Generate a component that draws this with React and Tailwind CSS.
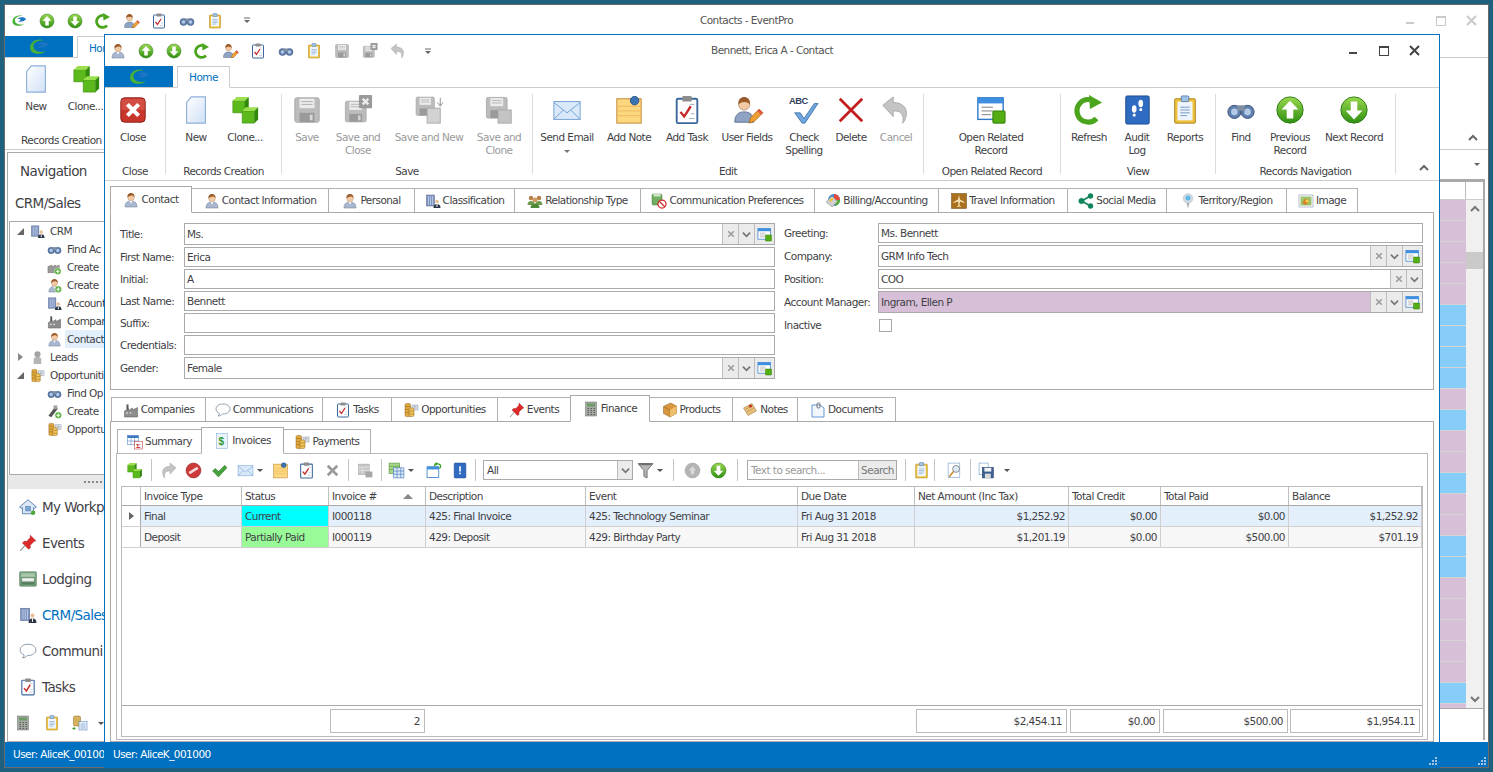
import React from 'react';

const green = (
  <linearGradient id="gr" x1="0" y1="0" x2="0" y2="1">
    <stop offset="0" stopColor="#9ad84e" />
    <stop offset="1" stopColor="#2f8f12" />
  </linearGradient>
);

const cube = (x, y, s) => (
  <g key={`${x}-${y}`}>
    <path d={`M${x} ${y + 4}h${s}v${s}h-${s}z`} fill="#5cb91c" stroke="#3c8a10" strokeWidth=".6" />
    <path d={`M${x} ${y + 4}l4 -4h${s}l-4 4z`} fill="#9be04c" />
    <path d={`M${x + s} ${y + 4}l4 -4v${s}l-4 4z`} fill="#2f8a0c" />
  </g>
);

const floppy = (
  <g>
    <rect x="3" y="3" width="26" height="26" rx="2" fill="#bcbcbc" stroke="#a8a8a8" />
    <rect x="8" y="4" width="16" height="10" fill="#ececec" />
    <path d="M10 7h12M10 10h12" stroke="#aaa" />
    <rect x="8" y="19" width="16" height="10" fill="#9a9a9a" />
    <rect x="19" y="21" width="3" height="6" fill="#d8d8d8" />
  </g>
);

const person = (
  <g>
    <path d="M4 30c0-9 5-12 12-12s12 3 12 12z" fill="#a9b8d0" stroke="#68788f" />
    <path d="M13 18l3 5 3-5z" fill="#fff" />
    <circle cx="16" cy="11" r="6.5" fill="#f2cba5" stroke="#a8785a" strokeWidth=".7" />
    <path d="M9 11c-1-7 4-9 7-9s8 2 7 9c-1-3-3-4-6-4-3 1-6 1-8 4z" fill="#9a5a2a" />
  </g>
);

const building = (
  <g>
    <rect x="3" y="4" width="16" height="22" fill="#7e94c0" stroke="#56688e" />
    <path d="M7 6v18M11 6v18M15 6v18" stroke="#c3d0e8" strokeWidth="1.6" />
    <circle cx="24" cy="17" r="3.6" fill="#e8bf95" />
    <path d="M17 30c0-6 3-8 7-8s7 2 7 8z" fill="#2b3444" />
    <path d="M23 22h2v6h-2z" fill="#fff" />
  </g>
);

const coins = (
  <g>
    <rect x="18" y="6" width="12" height="10" fill="#dfe5ee" stroke="#8a93a2" />
    <path d="M21 9h6M21 12h6" stroke="#7d8796" />
    <rect x="4" y="3" width="11" height="26" rx="3" fill="#e0a93f" stroke="#96661a" />
    <rect x="12" y="12" width="10" height="17" rx="3" fill="#efc45c" stroke="#96661a" />
    <path d="M4 9h11M4 15h8M4 21h8M12 18h10M12 24h10" stroke="#96661a" />
  </g>
);

const grayX = <path d="M7 7l18 18M25 7L7 25" stroke="#9a9a9a" strokeWidth="5" />;

const undoPath = 'M2 11L13 2v6c9 0 15 5 14 13-.5 4-2 7-4 9 1-4 1-8-2-11-2-2-5-2-8-2v6z';

const icons = {
  logo: (
    <g>
      <path d="M3 17C3 8 13 3 23 6 13 6 7 10 8 16c1 6 9 9 18 6-7 6-23 5-23-5z" fill="#49b13a" />
      <path d="M13 12c5-5 14-4 17 0-4 6-12 5-17 6 4-2 6-3 6-6z" fill="#1b74c4" />
    </g>
  ),
  up: (
    <g>
      <defs>{green}</defs>
      <circle cx="16" cy="16" r="14" fill="url(#gr)" stroke="#2a7a10" />
      <path d="M16 6l9 9.500h-5.500V25h-7v-9.500H7z" fill="#fff" />
    </g>
  ),
  down: (
    <g>
      <defs>{green}</defs>
      <circle cx="16" cy="16" r="14" fill="url(#gr)" stroke="#2a7a10" />
      <path d="M16 26l9-9.500h-5.500V7h-7v9.500H7z" fill="#fff" />
    </g>
  ),
  upGray: (
    <g>
      <circle cx="16" cy="16" r="14" fill="#b4b4b4" stroke="#a0a0a0" />
      <path d="M16 8l7 8h-4v7h-6v-7H9z" fill="#dadada" />
    </g>
  ),
  refresh: (
    <g>
      <path d="M24 25A12 12 0 1 1 17 5" fill="none" stroke="#4aa51c" strokeWidth="5.500" />
      <path d="M16 0l14 8-13 7z" fill="#4aa51c" />
    </g>
  ),
  userEdit: (
    <g>
      <path d="M3 29c0-8 4-11 10-11s10 3 10 11z" fill="#8ea3c4" stroke="#5d6f8d" />
      <circle cx="13" cy="10" r="6" fill="#f2cba5" stroke="#a8785a" strokeWidth=".7" />
      <path d="M7 10c-1-6 3-8 6-8s7 2 6 8c-2-3-8-4-12 0z" fill="#9a5a2a" />
      <path d="M18 30l2-6 9-9 4 4-9 9z" fill="#f0a030" stroke="#9a5a10" strokeWidth=".7" />
      <path d="M27 17l4 4 2-2-4-4z" fill="#e0554a" />
    </g>
  ),
  task: (
    <g>
      <rect x="5" y="4" width="22" height="26" rx="1.500" fill="#fff" stroke="#3c689c" strokeWidth="2" />
      <rect x="11" y="1" width="10" height="6" rx="1" fill="#8d8d8d" />
      <path d="M9 18l4 5 7-11" fill="none" stroke="#c62828" strokeWidth="2.500" />
      <path d="M20 20h4M18 25h6M19 10h5" stroke="#9ab" />
    </g>
  ),
  bino: (
    <g>
      <circle cx="9" cy="18" r="7" fill="#5f7fae" stroke="#3b5276" />
      <circle cx="23" cy="18" r="7" fill="#5f7fae" stroke="#3b5276" />
      <circle cx="9" cy="18" r="3.500" fill="#b5cae6" />
      <circle cx="23" cy="18" r="3.500" fill="#b5cae6" />
      <rect x="12" y="11" width="8" height="6" fill="#7f8da3" />
    </g>
  ),
  report: (
    <g>
      <rect x="5" y="4" width="22" height="26" rx="1" fill="#f0c23c" stroke="#a8801a" />
      <rect x="8" y="7" width="16" height="20" fill="#eef4fc" />
      <path d="M11 13h10M11 16h10M11 19h10M11 22h7" stroke="#6f95c4" />
      <rect x="12" y="1" width="8" height="6" rx="1" fill="#9fc2e6" stroke="#5a7fa8" />
    </g>
  ),
  save: floppy,
  saveX: (
    <g>
      <g transform="translate(0 4) scale(.85)">{floppy}</g>
      <rect x="17" y="0" width="14" height="14" rx="1" fill="#9a9a9a" />
      <path d="M21 4l6 6M27 4l-6 6" stroke="#eee" strokeWidth="2.500" />
    </g>
  ),
  saveNew: (
    <g>
      <g transform="scale(.75)">{floppy}</g>
      <rect x="14" y="14" width="14" height="16" fill="#d2d2d2" stroke="#a8a8a8" />
      <path d="M28 3v8M25 8l3 4 3-4" stroke="#8a8a8a" fill="none" />
    </g>
  ),
  saveClone: (
    <g>
      <g transform="scale(.85)">{floppy}</g>
      <rect x="15" y="16" width="14" height="14" fill="#c4c4c4" stroke="#a8a8a8" />
    </g>
  ),
  undo: <path d={undoPath} fill="#c4c4c4" stroke="#a8a8a8" />,
  redo: <path d={undoPath} fill="#c4c4c4" stroke="#a8a8a8" transform="matrix(-1 0 0 1 32 0)" />,
  person,
  lead: (
    <g>
      <circle cx="16" cy="9" r="6.500" fill="#a3a3a3" />
      <path d="M8 30V20c0-4 4-5 8-5s8 1 8 5v10z" fill="#b4b4b4" />
    </g>
  ),
  doc: (
    <g>
      <defs>
        <linearGradient id="dc" x1="0" y1="0" x2="1" y2="1">
          <stop offset="0" stopColor="#fff" />
          <stop offset="1" stopColor="#cfe0f6" />
        </linearGradient>
      </defs>
      <path d="M11 2h15v28H6V8z" fill="url(#dc)" stroke="#8fb0da" strokeWidth="1.200" />
    </g>
  ),
  cubes: <g>{cube(3, 2, 13)}{cube(13, 13, 13)}</g>,
  close: (
    <g>
      <rect x="3" y="3" width="26" height="26" rx="4" fill="#c8352a" stroke="#8c1c14" />
      <path d="M3.500 16V7c0-2 1-3 3-3h19c2 0 3 1 3 3v9z" fill="#e0665a" opacity=".5" />
      <path d="M10 10l12 12M22 10L10 22" stroke="#fff" strokeWidth="4.500" />
    </g>
  ),
  mail: (
    <g>
      <rect x="2" y="7" width="28" height="19" fill="#d9e9fa" stroke="#6f9fd3" />
      <path d="M2 8l14 11L30 8M2 26l10-10M30 26L20 16" fill="none" stroke="#6f9fd3" />
    </g>
  ),
  note: (
    <g>
      <rect x="3" y="4" width="26" height="26" fill="#fbd77f" stroke="#c18434" />
      <path d="M3 12h26M3 17h26M3 22h26" stroke="#eeb95e" />
      <circle cx="22" cy="6" r="4.500" fill="#3a74b4" stroke="#214f85" />
    </g>
  ),
  spell: (
    <g>
      <text x="0" y="10" fontFamily="'Liberation Sans',sans-serif" fontSize="10" fontWeight="700" fill="#333d60">ABC</text>
      <path d="M6 19l6 0 4 6L27 9l4 0-14 21h-3z" fill="#6fa6de" stroke="#33689e" strokeWidth=".8" />
    </g>
  ),
  del: <path d="M4 4l24 24M28 4L4 28" stroke="#c41f1f" strokeWidth="3" />,
  xGray: grayX,
  record: (
    <g>
      <rect x="2" y="3" width="27" height="23" fill="#fff" stroke="#2f7ac8" strokeWidth="1.500" />
      <rect x="2" y="3" width="27" height="6" fill="#3f8fe0" />
      <path d="M6 13h12M6 17h12M6 21h10" stroke="#777" />
      <rect x="18" y="17" width="13" height="13" rx="1" fill="#54ad12" stroke="#2f7c08" />
    </g>
  ),
  audit: (
    <g>
      <rect x="4" y="1" width="25" height="30" rx="1.500" fill="#2f6bc0" stroke="#1c4a8e" />
      <ellipse cx="13" cy="15" rx="2.500" ry="4" fill="#fff" />
      <rect x="11.500" y="20" width="3" height="3" rx="1" fill="#fff" />
      <ellipse cx="20" cy="9" rx="2.500" ry="4" fill="#fff" />
      <rect x="18.500" y="14" width="3" height="3" rx="1" fill="#fff" />
    </g>
  ),
  people: (
    <g>
      <circle cx="8" cy="10" r="4.500" fill="#b5814a" />
      <circle cx="24" cy="10" r="4.500" fill="#b5814a" />
      <circle cx="16" cy="14" r="5" fill="#d19a63" />
      <path d="M1 24c0-5 3-8 7-8s7 3 7 8zM17 24c0-5 3-8 7-8s7 3 7 8z" fill="#6e9b4d" />
      <path d="M7 30c0-6 4-9 9-9s9 3 9 9z" fill="#4f8a3a" />
    </g>
  ),
  commPref: (
    <g>
      <rect x="2" y="2" width="20" height="22" rx="3" fill="#6fae63" stroke="#417a3a" />
      <rect x="5" y="2" width="14" height="5" fill="#cbe6c4" />
      <circle cx="22" cy="22" r="8" fill="#fff" stroke="#d42a2a" strokeWidth="2.500" />
      <path d="M16.500 16.500l11 11" stroke="#d42a2a" strokeWidth="2.500" />
    </g>
  ),
  billing: (
    <g>
      <circle cx="18" cy="14" r="12" fill="#3f86d8" />
      <path d="M18 14V2a12 12 0 0 1 12 12z" fill="#e34a3c" />
      <path d="M18 14h12a12 12 0 0 1-9 11.500z" fill="#52ae33" />
      <path d="M2 18L14 6l11 11-11 11z" fill="#cfcfcf" stroke="#888" />
      <path d="M8 15l6-6 3 3-6 6z" fill="#f2c230" />
    </g>
  ),
  travel: (
    <g>
      <rect x="1" y="1" width="30" height="30" fill="#a9701d" stroke="#6e4710" />
      <path d="M16 4l2 9 9 5v2l-9-3-1 7 3 3v1l-4-1-4 1v-1l3-3-1-7-9 3v-2l9-5z" fill="#f6e2b4" />
    </g>
  ),
  share: (
    <g fill="#0e8458" stroke="#0e8458">
      <path d="M7 16L25 6M7 16l18 10" strokeWidth="3" fill="none" />
      <circle cx="7" cy="16" r="5.500" />
      <circle cx="25" cy="6" r="5" />
      <circle cx="25" cy="26" r="5" />
    </g>
  ),
  pin: (
    <g>
      <path d="M16 31l-3-12h6z" fill="#a8a8a8" />
      <circle cx="16" cy="11" r="9.500" fill="#d5dbe2" stroke="#aab2bc" />
      <circle cx="16" cy="10" r="5" fill="#5fb8e8" />
    </g>
  ),
  image: (
    <g>
      <rect x="2" y="4" width="28" height="24" fill="#fff" stroke="#6a7da0" />
      <rect x="5" y="7" width="22" height="18" fill="#9dc46a" />
      <path d="M14 11l7 3-1 7-7 3-4-5z" fill="#d77f2e" />
      <circle cx="18" cy="16" r="3" fill="#ffd24a" />
    </g>
  ),
  company: (
    <g>
      <path d="M3 18l8-5v4l8-5v4l10-5v19H3z" fill="#8d8d8d" stroke="#555" />
      <rect x="7" y="5" width="4" height="10" fill="#555" />
      <path d="M6 22h4M13 22h4" stroke="#eee" strokeWidth="2" />
    </g>
  ),
  bubble: (
    <g>
      <path d="M16 4C8 4 2 8 2 14c0 4 3 8 7 9 0 2-1 4-3 5 4 0 7-2 9-4h1c8 0 14-4 14-10S24 4 16 4z" fill="#fff" stroke="#76889c" strokeWidth="1.500" />
    </g>
  ),
  coins,
  pushpin: (
    <g>
      <path d="M20 2l10 10-3 1-7 7 0 5-3 2L6 16l3-3h5l6-7z" fill="#dc2a2a" stroke="#9c1414" strokeWidth=".7" />
      <path d="M11 20L2 30" stroke="#999" strokeWidth="2" />
    </g>
  ),
  calc: (
    <g>
      <rect x="5" y="2" width="22" height="28" fill="#a4a9a2" stroke="#6d706b" />
      <rect x="8" y="5" width="16" height="6" fill="#6f9b6a" />
      <path d="M9 15h3M15 15h3M21 15h3M9 19h3M15 19h3M21 19h3M9 23h3M15 23h3M21 23h3M9 27h3M15 27h3M21 27h3" stroke="#5b5b5b" strokeWidth="2" />
    </g>
  ),
  box: (
    <g>
      <path d="M3 9l14-7 12 6v15l-13 7-13-7z" fill="#d9973f" stroke="#8a5c1c" />
      <path d="M3 9l13 7v14" fill="none" stroke="#8a5c1c" />
      <path d="M16 16L29 8v15l-13 7z" fill="#f0be6b" />
    </g>
  ),
  notes: (
    <g>
      <path d="M3 12L20 3l9 15-17 9z" fill="#e7c07c" stroke="#8d6c2f" />
      <path d="M7 15l14-8M10 20l14-8" stroke="#a57d34" />
      <circle cx="17" cy="8" r="3" fill="#c62828" />
    </g>
  ),
  documents: (
    <g>
      <path d="M4 6h16l8 6v18H4z" fill="#f2f7fd" stroke="#3a78c0" strokeWidth="1.500" />
      <rect x="14" y="2" width="6" height="10" rx="2" fill="none" stroke="#555" strokeWidth="1.500" />
    </g>
  ),
  summary: (
    <g>
      <rect x="1" y="3" width="22" height="18" fill="#fff" stroke="#3a78c0" />
      <rect x="1" y="3" width="22" height="5" fill="#3a78c0" />
      <path d="M8 8v13M15 8v13M1 14h22" stroke="#3a78c0" />
      <rect x="15" y="15" width="16" height="15" fill="#fff" stroke="#b02020" />
      <text x="18" y="28" fontFamily="'Liberation Serif',serif" fontSize="14" fontWeight="700" fill="#c02020">Σ</text>
    </g>
  ),
  dollar: (
    <g>
      <rect x="5" y="1" width="22" height="30" fill="#eaf2fb" stroke="#7da4d2" />
      <text x="9" y="23" fontFamily="'Liberation Sans',sans-serif" fontSize="20" fontWeight="700" fill="#2f9a2f">$</text>
    </g>
  ),
  prohibit: (
    <g>
      <circle cx="16" cy="16" r="14" fill="#cc3a3a" stroke="#8e1e1e" />
      <path d="M8 21L24 11" stroke="#f6dada" strokeWidth="5" />
    </g>
  ),
  check: <path d="M3 17l5-5 6 6L26 6l4 5-16 17z" fill="#46a23c" stroke="#2a7424" />,
  grayGrid: (
    <g>
      <rect x="3" y="4" width="20" height="20" fill="#c8c8c8" stroke="#a0a0a0" />
      <path d="M3 10h20M3 16h20M10 10v14" stroke="#f2f2f2" />
      <rect x="16" y="18" width="13" height="11" fill="#a8a8a8" />
    </g>
  ),
  blueGrid: (
    <g>
      <rect x="2" y="2" width="20" height="20" fill="#a8d68a" stroke="#498a2c" />
      <path d="M2 8h20M2 14h20" stroke="#498a2c" />
      <rect x="10" y="11" width="20" height="19" fill="#dbe8f8" stroke="#2f6bb4" />
      <path d="M10 17h20M10 23h20M17 11v19M24 11v19" stroke="#2f6bb4" />
    </g>
  ),
  winArrow: (
    <g>
      <rect x="2" y="9" width="22" height="20" fill="#fff" stroke="#2f7ac8" strokeWidth="1.500" />
      <rect x="2" y="9" width="22" height="5" fill="#3f8fe0" />
      <path d="M16 8c0-4 4-6 8-4 4 1 5 6 1 8" fill="none" stroke="#3aa02a" strokeWidth="2.500" />
      <path d="M20 0l-5 4 6 3z" fill="#3aa02a" />
    </g>
  ),
  exBook: (
    <g>
      <rect x="6" y="2" width="22" height="28" rx="2" fill="#2f6bc0" stroke="#1c4a8e" />
      <rect x="15.500" y="8" width="3" height="10" fill="#fff" />
      <rect x="15.500" y="20" width="3" height="3" fill="#fff" />
    </g>
  ),
  funnel: (
    <g>
      <path d="M2 3h28L19 16v14l-6-3V16z" fill="#b7b7b7" stroke="#555" strokeWidth="1.400" />
      <ellipse cx="16" cy="4" rx="13" ry="2" fill="#6d6d6d" />
    </g>
  ),
  magnify: (
    <g>
      <rect x="4" y="2" width="22" height="27" fill="#fff" stroke="#5e8fc6" />
      <circle cx="19" cy="13" r="6.500" fill="#dce9f7" stroke="#777" strokeWidth="1.500" />
      <path d="M14 18L6 28" stroke="#c98a2e" strokeWidth="3" />
    </g>
  ),
  saveAs: (
    <g>
      <rect x="2" y="2" width="17" height="22" fill="#fff" stroke="#5e8fc6" />
      <rect x="8" y="10" width="21" height="20" fill="#3c5f90" stroke="#2a4670" />
      <rect x="12" y="11" width="13" height="7" fill="#f0f0f0" />
      <rect x="13" y="22" width="11" height="8" fill="#dcdcdc" />
    </g>
  ),
  house: (
    <g>
      <path d="M16 3L1 16l3 2 2-1v11h20V17l2 1 3-2z" fill="#dbe7f5" stroke="#4a76aa" strokeWidth="1.500" />
      <rect x="12" y="15" width="8" height="8" fill="#7ca6d8" stroke="#4a76aa" />
      <circle cx="25" cy="26" r="4" fill="#51a83a" />
    </g>
  ),
  lodging: (
    <g>
      <rect x="1" y="3" width="30" height="26" rx="2" fill="#7aa583" stroke="#55805d" />
      <rect x="4" y="6" width="24" height="6" fill="#a9c8ad" />
      <rect x="5" y="14" width="22" height="7" fill="#f0f0f0" stroke="#55805d" />
      <rect x="4" y="22" width="24" height="4" fill="#53785a" />
    </g>
  ),
  building,
  createCo: (
    <g>
      <path d="M2 14l8-3v3l8-3v3l8-3v16H2z" fill="#9a9a9a" stroke="#666" />
      <circle cx="23" cy="24" r="7" fill="#4dab2e" stroke="#fff" />
      <path d="M23 20v8M19 24h8" stroke="#fff" strokeWidth="2.500" />
    </g>
  ),
  createPerson: (
    <g>
      {person}
      <circle cx="24" cy="24" r="7" fill="#4dab2e" stroke="#fff" />
      <path d="M24 20v8M20 24h8" stroke="#fff" strokeWidth="2.500" />
    </g>
  ),
  createOpp: (
    <g>
      <path d="M3 25L18 5l5 5-14 18z" fill="#555" />
      <rect x="14" y="3" width="8" height="8" fill="#a1a1a1" />
      <circle cx="24" cy="24" r="7" fill="#4dab2e" stroke="#fff" />
      <path d="M24 20v8M20 24h8" stroke="#fff" strokeWidth="2.500" />
    </g>
  ),
  coinDoc: (
    <g>
      <rect x="3" y="2" width="14" height="20" rx="3" fill="#d7b25d" stroke="#8f6e22" />
      <rect x="14" y="13" width="16" height="17" fill="#e9f1fb" stroke="#4a79b4" />
      <path d="M17 18h10M17 22h10M17 26h10" stroke="#4a79b4" />
      <path d="M4 24v6M1 27h6" stroke="#3a9a2a" strokeWidth="2" />
    </g>
  ),
};

const Ic = ({ n, s = 16 }) => (
  <svg width={s} height={s} viewBox="0 0 32 32" className="shrink-0 overflow-visible">
    {icons[n]}
  </svg>
);

const DownTri = ({ className = 'border-t-[#555]' }) => (
  <span className={`h-0 w-0 border-x-[3px] border-t-[3px] border-x-transparent ${className}`} />
);

// small dropdown glyph of the quick access bar
const QatMore = () => (
  <svg width="8" height="7" viewBox="0 0 8 7" className="shrink-0">
    <path d="M1 1h6" stroke="#666" />
    <path d="M1 3h6L4 6z" fill="#666" />
  </svg>
);

const Chevron = ({ up, c = '#666', s = 10 }) => (
  <svg width={s} height={s} viewBox="0 0 10 10" className="shrink-0">
    <path d={up ? 'M1 7l4-4 4 4' : 'M1 3l4 4 4-4'} fill="none" stroke={c} strokeWidth="2" />
  </svg>
);

const WinControls = ({ faded }) => (
  <svg width="76" height="14" viewBox="0 0 76 14" className="shrink-0">
    <g stroke={faded ? '#c9c9c9' : '#444'} fill="none">
      <path d="M1 9h8" strokeWidth="2" />
      <rect x="31.500" y="2.500" width="9" height="9" />
      <path d="M31 3h10" strokeWidth="2" />
      <path d="M62 2l9 9M71 2l-9 9" strokeWidth="2" />
    </g>
  </svg>
);

const Grip = () => (
  <svg width="9" height="9" viewBox="0 0 9 9" className="shrink-0">
    <path d="M7 1h2v2H7zM4 4h2v2H4zM7 4h2v2H7zM1 7h2v2H1zM4 7h2v2H4zM7 7h2v2H7z" fill="#9fc4e6" />
  </svg>
);

const RibbonBtn = ({ w, icon, lines, off, arrow }) => (
  <div className={`flex shrink-0 flex-col items-center text-center leading-[13px] ${w} ${off ? 'text-[#9a9a9a]' : ''}`}>
    <div className="flex h-[32px] items-center">
      <Ic n={icon} s={30} />
    </div>
    <div className="mt-[5px] whitespace-nowrap">{lines[0]}</div>
    {lines[1] && <div>{lines[1]}</div>}
    {arrow && <div className="mt-[6px] flex"><DownTri className="border-t-[#777]" /></div>}
  </div>
);

const RibbonGroup = ({ w, pad, label, children }) => (
  <div className={`mt-[6px] flex h-[80px] shrink-0 flex-col border-r border-[#dcdcdc] ${w}`}>
    <div className={`flex flex-1 ${pad}`}>{children}</div>
    <div className="-mb-1 h-[14px] text-center leading-[14px]">{label}</div>
  </div>
);

const FormTab = ({ w, icon, label, active }) => (
  <div
    className={`-mr-px flex shrink-0 items-center justify-center gap-[2px] border ${w} ${
      active ? 'relative z-10 h-[27px] border-[#aaa] border-b-white bg-white' : 'h-[25px] border-[#b0b0b0] pt-[1px]'
    }`}
  >
    {icon && <Ic n={icon} s={16} />}
    <span>{label}</span>
  </div>
);

const Field = ({ label, value, h = 'h-[20px]', lw = 'w-[64px]', bg = 'bg-white', btns = [] }) => (
  <div className="flex items-center">
    <div className={`shrink-0 pt-[1px] ${lw}`}>{label}</div>
    <div className={`flex min-w-0 flex-1 items-stretch border border-[#aaa] ${h} ${bg}`}>
      <div className="flex flex-1 items-center truncate pl-[2px] pt-[1px]">{value}</div>
      {btns.map(b => (
        <div
          key={b}
          className={`flex shrink-0 items-center justify-center border-l border-[#bdbdbd] bg-[#ebebeb] ${b === 'open' ? 'w-[20px]' : 'w-[16px]'}`}
        >
          {b === 'x' && <Ic n="xGray" s={10} />}
          {b === 'down' && <Chevron c="#777" s={9} />}
          {b === 'open' && <Ic n="record" s={15} />}
        </div>
      ))}
    </div>
  </div>
);

const Sep = ({ w }) => (
  <div className={`flex h-[22px] shrink-0 justify-center ${w}`}>
    <div className="w-px bg-[#c4c4c4]" />
  </div>
);

const Tool = ({ w = 'w-[26px]', n, s = 17, arrow }) => (
  <div className={`flex h-[22px] shrink-0 items-center justify-center gap-[3px] ${w}`}>
    <Ic n={n} s={s} />
    {arrow && <DownTri />}
  </div>
);

const cols = 'grid grid-cols-[19px_101px_87px_97px_160px_212px_117px_154px_92px_128px_133px]';

const invoices = [
  {
    type: 'Final', status: 'Current', statusBg: 'bg-[#00ffff]', num: 'I000118', desc: '425: Final Invoice',
    event: '425: Technology Seminar', due: 'Fri Aug 31 2018', net: '$1,252.92', credit: '$0.00', paid: '$0.00',
    bal: '$1,252.92', rowBg: 'bg-[#e3effa]', cur: true,
  },
  {
    type: 'Deposit', status: 'Partially Paid', statusBg: 'bg-[#98fb98]', num: 'I000119', desc: '429: Deposit',
    event: '429: Birthday Party', due: 'Fri Aug 31 2018', net: '$1,201.19', credit: '$0.00', paid: '$500.00',
    bal: '$701.19', rowBg: 'bg-[#f7f7f7]',
  },
];

const Cell = ({ children, right, bg = '' }) => (
  <div className={`truncate border-r border-[#cfcfcf] px-[3px] leading-[20px] ${right ? 'text-right' : ''} ${bg}`}>
    {children}
  </div>
);

const Head = ({ children }) => (
  <div className="flex items-center justify-between truncate border-r border-[#c0c0c0] px-[3px] pt-[1px]">
    {children}
  </div>
);

const backRows = ['p', 'p', 'p', 'p', 'p', 'b', 'b', 'b', 'b', 'p', 'b', 'p', 'p', 'b', 'p', 'p', 'b', 'b', 'p', 'p', 'p', 'p', 'p', 'b'];

// the labels stop where the contact window covers them
const treeRows = [
  { n: 'building', t: 'CRM', open: true },
  { n: 'bino', t: 'Find Ac', sub: true },
  { n: 'createCo', t: 'Create', sub: true },
  { n: 'createPerson', t: 'Create', sub: true },
  { n: 'building', t: 'Account', sub: true },
  { n: 'company', t: 'Compar', sub: true },
  { n: 'person', t: 'Contact', sub: true, sel: true },
  { n: 'lead', t: 'Leads', closed: true },
  { n: 'coins', t: 'Opportuniti', open: true },
  { n: 'bino', t: 'Find Op', sub: true },
  { n: 'createOpp', t: 'Create', sub: true },
  { n: 'coins', t: 'Opportu', sub: true },
];

const navItems = [
  { n: 'house', t: 'My Workp' },
  { n: 'pushpin', t: 'Events' },
  { n: 'lodging', t: 'Lodging' },
  { n: 'building', t: 'CRM/Sales', on: true },
  { n: 'bubble', t: 'Communi' },
  { n: 'task', t: 'Tasks' },
];

const BackWindow = () => (
  <div className="absolute left-[4px] top-[4px] flex h-[764px] w-[1485px] flex-col border border-[#6a6a6a] bg-white">
    {/* title bar */}
    <div className="flex h-[31px] shrink-0 items-center">
      <div className="flex w-[260px] shrink-0 items-center">
        {['logo', 'up', 'down', 'refresh', 'userEdit', 'task', 'bino', 'report'].map(n => (
          <div key={n} className="flex w-[28px] justify-center"><Ic n={n} s={16} /></div>
        ))}
        <div className="ml-[14px]"><QatMore /></div>
      </div>
      <div className="flex-1 text-center text-[#555]">Contacts - EventPro</div>
      <div className="flex w-[260px] shrink-0 justify-end pr-[7px]"><WinControls faded /></div>
    </div>
    {/* tab row */}
    <div className="flex h-[22px] shrink-0 border-b border-[#ccc]">
      <div className="flex w-[68px] items-center justify-center bg-[#0070c0]"><Ic n="logo" s={22} /></div>
      <div className="ml-[4px] flex h-[22px] w-[32px] items-center border-l border-t border-[#ccc] bg-white pl-[11px] pt-[2px] text-[#0070c0]">Hom</div>
    </div>
    {/* ribbon */}
    <div className="flex h-[92px] shrink-0 justify-between border-b border-[#ccc]">
      <div className="flex w-[99px] shrink-0 flex-col">
        <div className="flex pt-[5px]">
          <RibbonBtn w="w-[62px]" icon="doc" lines={['New']} />
          <RibbonBtn w="w-[37px]" icon="cubes" lines={['Clone...']} />
        </div>
        <div className="mb-[2px] mt-auto h-[14px] whitespace-nowrap pl-[16px] leading-[14px]">Records Creation</div>
      </div>
      <div className="flex items-end pb-[6px] pr-[10px]"><Chevron up /></div>
    </div>
    {/* body */}
    <div className="flex min-h-0 flex-1 pt-[2px]">
      <div className="ml-[2px] flex w-[104px] shrink-0 flex-col overflow-hidden border border-[#aaa]">
        <div className="h-[68px] shrink-0 whitespace-nowrap text-[13.5px] tracking-[-0.6px]">
          <div className="pl-[12px] pt-[8px] leading-[20px]">Navigation</div>
          <div className="pl-[7px] pt-[12px] leading-[20px]">CRM/Sales</div>
        </div>
        <div className="ml-px h-[254px] shrink-0 border-y border-l border-[#aaa]">
          {treeRows.map(r => (
            <div key={`${r.t}-${r.n}`} className={`flex h-[18px] items-center ${r.sub ? 'pl-[37px]' : 'pl-[6px]'}`}>
              {!r.sub && (
                <span className="flex w-[14px] shrink-0">
                  {r.open && <span className="ml-[1px] h-0 w-0 border-b-[7px] border-l-[7px] border-b-[#666] border-l-transparent" />}
                  {r.closed && <span className="ml-[2px] h-0 w-0 border-y-[4px] border-l-[5px] border-y-transparent border-l-[#888]" />}
                </span>
              )}
              <Ic n={r.n} s={15} />
              <span className={`ml-[3px] h-[18px] min-w-0 flex-1 whitespace-nowrap pl-[2px] leading-[18px] ${r.sel ? 'bg-[#e3effa]' : ''}`}>{r.t}</span>
            </div>
          ))}
        </div>
        <div className="flex h-[14px] shrink-0 items-center bg-[#e8e8e8] pl-[76px]">
          <span className="w-[22px] border-t-2 border-dotted border-[#888]" />
        </div>
        <div className="flex-1">
          {navItems.map(i => (
            <div key={i.t} className={`flex h-[36px] items-center pl-[11px] text-[13.5px] tracking-[-0.6px] ${i.on ? 'text-[#0070c0]' : ''}`}>
              <Ic n={i.n} s={18} />
              <span className="ml-[5px] min-w-0 flex-1 whitespace-nowrap">{i.t}</span>
            </div>
          ))}
          <div className="flex h-[36px] items-center pl-[7px]">
            <div className="w-[29px]"><Ic n="calc" s={16} /></div>
            <div className="w-[28px]"><Ic n="report" s={16} /></div>
            <div className="w-[26px]"><Ic n="coinDoc" s={16} /></div>
            <DownTri />
          </div>
        </div>
      </div>
      <div className="flex-1" />
      <div className="flex w-[60px] shrink-0 flex-col">
        <div className="flex h-[27px] shrink-0 items-center justify-end pb-[2px] pr-[8px]">
          <DownTri className="border-t-[#666]" />
        </div>
        <div className="mb-[2px] mr-[3px] flex min-h-0 flex-1 flex-col border-r-[2px] border-t-[3px] border-[#aaa]">
          <div className="flex h-[18px] shrink-0 border-b border-[#ccc]">
            <div className="flex-1" />
            <div className="w-[18px] border-l border-[#bbb]" />
          </div>
          <div className="flex h-[509px] shrink-0 border-b border-[#aaa]">
            <div className="flex-1 overflow-hidden">
              {backRows.map((r, i) => (
                <div key={i} className={`h-[21px] border-b border-[#d4d4d4] ${r === 'b' ? 'bg-[#87cdfa]' : 'bg-[#d7bfd7]'}`} />
              ))}
              <div className="h-[5px] bg-[#d7bfd7]" />
            </div>
            <div className="flex w-[17px] shrink-0 flex-col items-center bg-[#f0f0f0] py-[4px]">
              <Chevron up c="#777" />
              <div className="mt-[38px] h-[17px] w-full bg-[#cacaca]" />
              <div className="mt-auto"><Chevron c="#777" /></div>
            </div>
          </div>
          <div className="flex-1" />
        </div>
      </div>
    </div>
    {/* status */}
    <div className="flex h-[25px] shrink-0 items-center justify-between bg-[#0070c0] pl-[8px] pr-[2px] text-white">
      <span className="whitespace-nowrap">User: AliceK_00100</span>
      <div className="self-end pb-[2px]"><Grip /></div>
    </div>
  </div>
);

const contactTabs = [
  { w: 'w-[82px]', icon: 'person', label: 'Contact', active: true },
  { w: 'w-[138px]', icon: 'person', label: 'Contact Information' },
  { w: 'w-[87px]', icon: 'person', label: 'Personal' },
  { w: 'w-[101px]', icon: 'building', label: 'Classification' },
  { w: 'w-[127px]', icon: 'people', label: 'Relationship Type' },
  { w: 'w-[175px]', icon: 'commPref', label: 'Communication Preferences' },
  { w: 'w-[125px]', icon: 'billing', label: 'Billing/Accounting' },
  { w: 'w-[130px]', icon: 'travel', label: 'Travel Information' },
  { w: 'w-[100px]', icon: 'share', label: 'Social Media' },
  { w: 'w-[121px]', icon: 'pin', label: 'Territory/Region' },
  { w: 'w-[72px]', icon: 'image', label: 'Image' },
];

const detailTabs = [
  { w: 'w-[95px]', icon: 'company', label: 'Companies' },
  { w: 'w-[118px]', icon: 'bubble', label: 'Communications' },
  { w: 'w-[70px]', icon: 'task', label: 'Tasks' },
  { w: 'w-[107px]', icon: 'coins', label: 'Opportunities' },
  { w: 'w-[74px]', icon: 'pushpin', label: 'Events' },
  { w: 'w-[80px]', icon: 'calc', label: 'Finance', active: true },
  { w: 'w-[84px]', icon: 'box', label: 'Products' },
  { w: 'w-[66px]', icon: 'notes', label: 'Notes' },
  { w: 'w-[99px]', icon: 'documents', label: 'Documents' },
];

const FrontWindow = () => (
  <div className="absolute left-[104px] top-[34px] flex h-[734px] w-[1336px] flex-col border border-[#0070c0] bg-white">
    {/* title bar */}
    <div className="flex h-[31px] shrink-0 items-center pt-[1px]">
      <div className="-ml-px flex w-[331px] shrink-0 items-center">
        {['person', 'up', 'down', 'refresh', 'userEdit', 'task', 'bino', 'report', 'save', 'saveX', 'undo'].map(n => (
          <div key={n} className="flex w-[28px] justify-center"><Ic n={n} s={16} /></div>
        ))}
        <div className="ml-[12px]"><QatMore /></div>
      </div>
      <div className="flex-1 text-center text-[#555]">Bennett, Erica A - Contact</div>
      <div className="flex w-[330px] justify-end pr-[15px]"><WinControls /></div>
    </div>
    {/* tab row */}
    <div className="flex h-[22px] shrink-0 border-b border-[#ccc]">
      <div className="flex w-[68px] items-center justify-center bg-[#0070c0]"><Ic n="logo" s={22} /></div>
      <div className="ml-[4px] flex h-[22px] w-[53px] items-center justify-center border border-[#ccc] border-b-white bg-white pt-[2px] text-[#0070c0]">Home</div>
    </div>
    {/* ribbon */}
    <div className="flex h-[93px] shrink-0 border-b border-[#ccc]">
      <RibbonGroup w="w-[61px]" pad="pl-0" label="Close">
        <RibbonBtn w="w-[56px]" icon="close" lines={['Close']} />
      </RibbonGroup>
      <RibbonGroup w="w-[116px]" pad="pl-[6px]" label="Records Creation">
        <RibbonBtn w="w-[48px]" icon="doc" lines={['New']} />
        <RibbonBtn w="w-[50px]" icon="cubes" lines={['Clone...']} />
      </RibbonGroup>
      <RibbonGroup w="w-[251px]" pad="pl-[3px]" label="Save">
        <RibbonBtn w="w-[44px]" icon="save" lines={['Save']} off />
        <RibbonBtn w="w-[58px]" icon="saveX" lines={['Save and', 'Close']} off />
        <RibbonBtn w="w-[84px]" icon="saveNew" lines={['Save and New']} off />
        <RibbonBtn w="w-[56px]" icon="saveClone" lines={['Save and', 'Clone']} off />
      </RibbonGroup>
      <RibbonGroup w="w-[391px]" pad="pl-[3px]" label="Edit">
        <RibbonBtn w="w-[62px]" icon="mail" lines={['Send Email']} arrow />
        <RibbonBtn w="w-[62px]" icon="note" lines={['Add Note']} />
        <RibbonBtn w="w-[54px]" icon="task" lines={['Add Task']} />
        <RibbonBtn w="w-[66px]" icon="userEdit" lines={['User Fields']} />
        <RibbonBtn w="w-[48px]" icon="spell" lines={['Check', 'Spelling']} />
        <RibbonBtn w="w-[46px]" icon="del" lines={['Delete']} />
        <RibbonBtn w="w-[44px]" icon="undo" lines={['Cancel']} off />
      </RibbonGroup>
      <RibbonGroup w="w-[137px]" pad="pl-[26px]" label="Open Related Record">
        <RibbonBtn w="w-[82px]" icon="record" lines={['Open Related', 'Record']} />
      </RibbonGroup>
      <RibbonGroup w="w-[155px]" pad="pl-[4px]" label="View">
        <RibbonBtn w="w-[48px]" icon="refresh" lines={['Refresh']} />
        <RibbonBtn w="w-[48px]" icon="audit" lines={['Audit', 'Log']} />
        <RibbonBtn w="w-[48px]" icon="report" lines={['Reports']} />
      </RibbonGroup>
      <RibbonGroup w="w-[180px]" pad="pl-[4px]" label="Records Navigation">
        <RibbonBtn w="w-[42px]" icon="bino" lines={['Find']} />
        <RibbonBtn w="w-[56px]" icon="up" lines={['Previous', 'Record']} />
        <RibbonBtn w="w-[72px]" icon="down" lines={['Next Record']} />
      </RibbonGroup>
      <div className="flex flex-1 items-end justify-end pb-[7px] pr-[10px]"><Chevron up /></div>
    </div>

    {/* contact tabs */}
    <div className="flex shrink-0 items-end pl-[5px] pt-[5px]">
      {contactTabs.map(t => <FormTab key={t.label} {...t} />)}
    </div>
    <div className="relative -mt-px ml-[5px] flex h-[178px] w-[1324px] shrink-0 gap-[9px] border border-[#aaa] pl-[9px] pr-[10px] pt-[10px]">
      <div className="flex w-[655px] shrink-0 flex-col gap-[2px]">
        <Field label="Title:" value="Ms." h="h-[22px]" btns={['x', 'down', 'open']} />
        <Field label="First Name:" value="Erica" />
        <Field label="Initial:" value="A" />
        <Field label="Last Name:" value="Bennett" />
        <Field label="Suffix:" value="" />
        <Field label="Credentials:" value="" />
        <Field label="Gender:" value="Female" h="h-[22px]" btns={['x', 'down', 'open']} />
      </div>
      <div className="flex flex-1 flex-col gap-[2px]">
        <Field lw="w-[94px]" label="Greeting:" value="Ms. Bennett" />
        <Field lw="w-[94px]" label="Company:" value="GRM Info Tech" h="h-[22px]" btns={['x', 'down', 'open']} />
        <Field lw="w-[94px]" label="Position:" value="COO" btns={['x', 'down']} />
        <Field lw="w-[94px]" label="Account Manager:" value="Ingram, Ellen P" h="h-[22px]" bg="bg-[#d7bfd7]" btns={['x', 'down', 'open']} />
        <div className="mt-[3px] flex items-center">
          <div className="w-[95px] shrink-0">Inactive</div>
          <div className="h-[13px] w-[13px] border border-[#aaa]" />
        </div>
      </div>
    </div>

    {/* detail tabs */}
    <div className="mt-[5px] flex shrink-0 items-end pl-[6px]">
      {detailTabs.map(t => <FormTab key={t.label} {...t} />)}
    </div>
    <div className="-mt-px ml-[5px] flex min-h-0 w-[1324px] flex-1 flex-col border border-[#aaa] pb-[1px] pl-[6px] pr-[5px]">
      <div className="flex h-[32px] shrink-0 items-end">
        <FormTab w="w-[85px]" icon="summary" label="Summary" />
        <FormTab w="w-[83px]" icon="dollar" label="Invoices" active />
        <FormTab w="w-[88px]" icon="coins" label="Payments" />
      </div>
      <div className="-ml-px -mt-px flex min-h-0 flex-1 flex-col border border-[#b8b8b8] px-[4px] pb-[2px]">
        {/* toolbar */}
        <div className="flex h-[32px] shrink-0 items-center">
          <Tool n="cubes" />
          <Sep w="w-[8px]" />
          <Tool n="redo" />
          <Tool w="w-[25px]" n="prohibit" />
          <Tool n="check" />
          <Tool w="w-[36px]" n="mail" arrow />
          <Tool w="w-[25px]" n="note" />
          <Tool n="task" />
          <Tool n="xGray" />
          <Sep w="w-[6px]" />
          <Tool w="w-[28px]" n="grayGrid" />
          <Sep w="w-[4px]" />
          <Tool w="w-[36px]" n="blueGrid" arrow />
          <Tool w="w-[30px]" n="winArrow" />
          <Tool w="w-[20px]" n="exBook" />
          <Sep w="w-[12px]" />
          <div className="ml-[2px] flex h-[20px] w-[150px] shrink-0 items-center border border-[#aaa] pl-[3px]">
            <span className="flex-1 pt-[1px]">All</span>
            <div className="flex h-full w-[15px] items-center justify-center border-l border-[#bbb] bg-[#ebebeb]"><Chevron c="#777" s={9} /></div>
          </div>
          <Tool w="w-[34px]" n="funnel" arrow />
          <Sep w="w-[12px]" />
          <Tool n="upGray" />
          <Tool n="down" />
          <Sep w="w-[12px]" />
          <div className="ml-[4px] flex h-[20px] w-[150px] shrink-0 items-center border border-[#aaa] pl-[3px] text-[#999]">
            <span className="flex-1 pt-[1px]">Text to search...</span>
            <div className="flex h-full w-[38px] items-center justify-center border-l border-[#bbb] bg-[#ebebeb] pt-[1px] text-[#777]">Search</div>
          </div>
          <Sep w="w-[16px]" />
          <Tool w="w-[16px]" n="report" />
          <Sep w="w-[10px]" />
          <Tool w="w-[30px]" n="magnify" />
          <Sep w="w-[2px]" />
          <Tool w="w-[30px]" n="saveAs" />
          <div className="ml-[3px] flex"><DownTri /></div>
        </div>
        {/* grid */}
        <div className="flex min-h-0 flex-1 flex-col border border-[#bbb]">
          <div className={`${cols} h-[19px] shrink-0 border-b border-[#aaa]`}>
            <Head />
            <Head>Invoice Type</Head>
            <Head>Status</Head>
            <Head>
              <span>Invoice #</span>
              <span className="mr-[9px] h-0 w-0 border-x-[5px] border-b-[5px] border-x-transparent border-b-[#888]" />
            </Head>
            <Head>Description</Head>
            <Head>Event</Head>
            <Head>Due Date</Head>
            <Head>Net Amount (Inc Tax)</Head>
            <Head>Total Credit</Head>
            <Head>Total Paid</Head>
            <Head>Balance</Head>
          </div>
          {invoices.map(r => (
            <div key={r.num} className={`${cols} h-[21px] shrink-0 border-b border-[#cfcfcf]`}>
              <div className="flex items-center justify-center border-r border-[#aaa]">
                {r.cur && <span className="h-0 w-0 border-y-[4px] border-l-[5px] border-y-transparent border-l-[#666]" />}
              </div>
              <Cell bg={r.rowBg}>{r.type}</Cell>
              <Cell bg={r.statusBg}>{r.status}</Cell>
              <Cell bg={r.rowBg}>{r.num}</Cell>
              <Cell bg={r.rowBg}>{r.desc}</Cell>
              <Cell bg={r.rowBg}>{r.event}</Cell>
              <Cell bg={r.rowBg}>{r.due}</Cell>
              <Cell bg={r.rowBg} right>{r.net}</Cell>
              <Cell bg={r.rowBg} right>{r.credit}</Cell>
              <Cell bg={r.rowBg} right>{r.paid}</Cell>
              <Cell bg={r.rowBg} right>{r.bal}</Cell>
            </div>
          ))}
          <div className="flex-1" />
          <div className="flex h-[31px] shrink-0 items-center border-t border-[#aaa] pl-[208px]">
            <div className="h-[24px] w-[95px] shrink-0 border border-[#bbb] pr-[4px] text-right leading-[22px]">2</div>
            <div className="ml-[491px] h-[24px] w-[151px] shrink-0 border border-[#bbb] pr-[4px] text-right leading-[22px]">$2,454.11</div>
            <div className="ml-[3px] h-[24px] w-[90px] shrink-0 border border-[#bbb] pr-[4px] text-right leading-[22px]">$0.00</div>
            <div className="ml-[3px] h-[24px] w-[125px] shrink-0 border border-[#bbb] pr-[4px] text-right leading-[22px]">$500.00</div>
            <div className="ml-[2px] h-[24px] w-[130px] shrink-0 border border-[#bbb] pr-[4px] text-right leading-[22px]">$1,954.11</div>
          </div>
        </div>
      </div>
    </div>
    {/* status */}
    <div className="flex h-[25px] shrink-0 items-center justify-between bg-[#0070c0] pl-[8px] pr-[2px] text-white">
      <span>User: AliceK_001000</span>
      <div className="self-end pb-[2px]"><Grip /></div>
    </div>
  </div>
);

export default function App() {
  return (
    <div className="relative h-[772px] w-[1493px] overflow-hidden bg-[#1f607f] font-['DejaVu_Sans',sans-serif] text-[10.5px] tracking-[-0.55px] text-[#3f3f46]">
      <BackWindow />
      <FrontWindow />
    </div>
  );
}
